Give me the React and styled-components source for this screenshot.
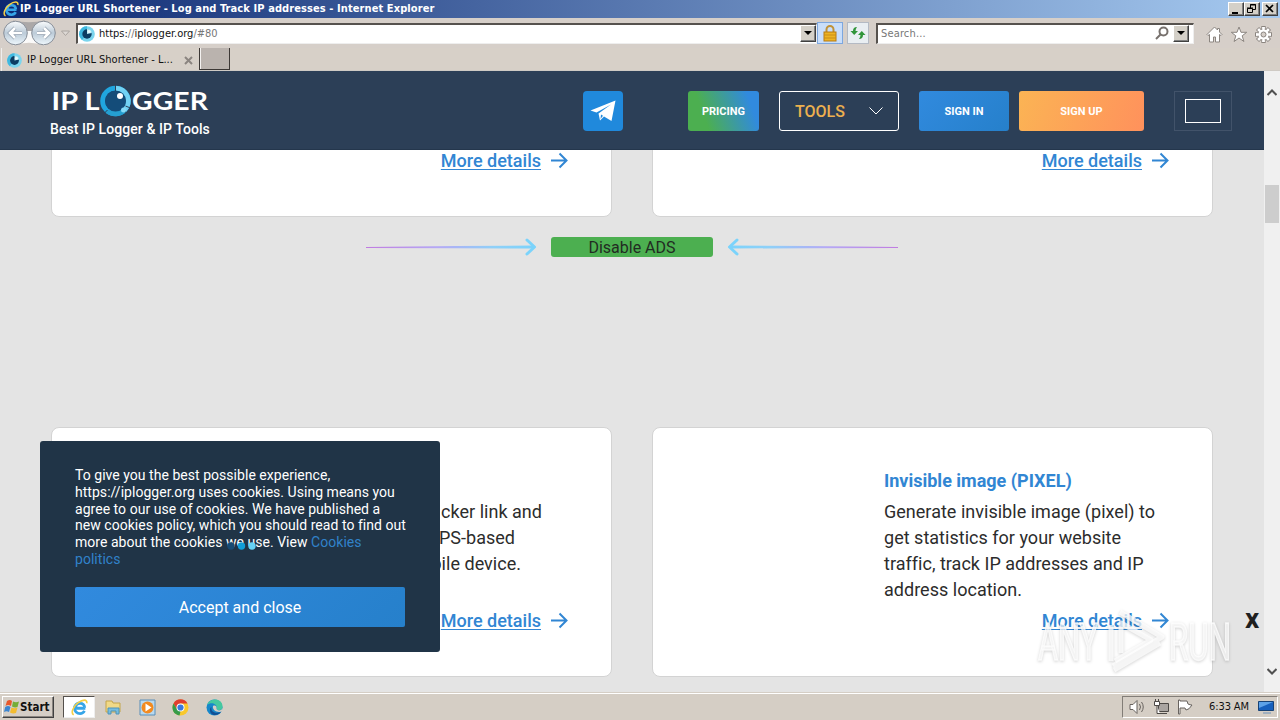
import React from 'react';
import styled, { createGlobalStyle } from 'styled-components';

const GlobalStyle = createGlobalStyle`
	* {
		box-sizing: border-box;
	}
	body {
		margin: 0;
		overflow: hidden;
		font-family: Roboto, sans-serif;
	}
`;

const Screen = styled.div`
	width: 1280px;
	height: 720px;
	display: flex;
	flex-direction: column;
	background: #d5cec6;
`;

const SystemText = styled.span`
	font-family: 'DejaVu Sans Condensed', 'DejaVu Sans', sans-serif;
	font-stretch: condensed;
	font-size: ${(p) => p.$size || 11}px;
	font-weight: ${(p) => (p.$bold ? 700 : 400)};
	letter-spacing: ${(p) => p.$spacing || 0}px;
	color: ${(p) => p.$color || '#111'};
	white-space: nowrap;
	line-height: 14px;
`;

/* window chrome */
const TitleBar = styled.div`
	height: 18px;
	flex: none;
	display: flex;
	align-items: center;
	padding: 0 2px 0 3px;
	gap: 1px;
	background: linear-gradient(90deg, #0c2871, #a6caf0);
`;

const WindowButtons = styled.div`
	display: flex;
	margin-left: auto;
`;

const WindowButton = styled.div`
	width: 16px;
	height: 14px;
	margin-left: ${(p) => p.$gap || 0}px;
	background: #d4d0c8;
	border: 1px solid;
	border-color: #fff #404040 #404040 #fff;
	box-shadow: inset -1px -1px #808080;
	svg {
		display: block;
	}
`;

const NavBar = styled.div`
	height: 30px;
	flex: none;
	display: flex;
	align-items: center;
	padding-left: 2px;
	background: #d6cfc9;
`;

const AddressField = styled.div`
	width: ${(p) => p.$width}px;
	height: 21px;
	margin-left: ${(p) => p.$left}px;
	display: flex;
	align-items: center;
	background: #fff;
	border: solid;
	border-width: 2px 1px 1px 2px;
	border-color: #56524e #eee #eee #56524e;
	padding: 0 ${(p) => p.$end || 0}px 0 ${(p) => p.$start || 1}px;
	gap: 4px;
`;

const DropButton = styled.div`
	width: 16px;
	height: 17px;
	flex: none;
	display: flex;
	align-items: center;
	justify-content: center;
	background: #d4d0c8;
	border: 1px solid;
	border-color: #fff #404040 #404040 #fff;
	box-shadow: inset -1px -1px #808080;
`;

const Spacer = styled.div`
	flex: 1;
`;

const ToolButton = styled.div`
	width: ${(p) => p.$width}px;
	height: 22px;
	margin-left: ${(p) => p.$left}px;
	display: flex;
	align-items: center;
	justify-content: center;
	border: 1px solid ${(p) => p.$border};
	background: ${(p) => p.$fill};
`;

const BrowserIcons = styled.div`
	display: flex;
	gap: 7px;
	margin: 3px 0 0 12px;
`;

const TabRow = styled.div`
	height: 23px;
	flex: none;
	display: flex;
	align-items: flex-start;
	background: #d7d0c8;
	border-bottom: 1px solid #cfcac4;
`;

const Tab = styled.div`
	width: 198px;
	height: 23px;
	margin-left: 1px;
	padding: 1px 6px 0 5px;
	display: flex;
	align-items: center;
	border-left: 1px solid #eee;
	gap: 5px;
	svg:last-child {
		margin-left: auto;
	}
`;

const NewTab = styled.div`
	width: 31px;
	height: 22px;
	background: #bab3ae;
	border: solid #3c3835;
	border-width: 0 1px 1px 1px;
	box-shadow: inset 1px 0 #f4f2f0;
`;

/* page */
const Viewport = styled.div`
	height: 621px;
	flex: none;
	display: flex;
	position: relative;
`;

const Page = styled.div`
	width: 1264px;
	height: 621px;
	display: flex;
	flex-direction: column;
	background: #e4e4e4;
	overflow: hidden;
`;

const Header = styled.header`
	height: 79px;
	flex: none;
	display: flex;
	align-items: flex-start;
	padding: 20px 32px 0 50px;
	background: #2c3f57;
	border-bottom: 1px solid #24364c;
`;

const Brand = styled.div`
	width: 180px;
	margin: -14px 353px 0 0;
	color: #fff;
	font-size: 14px;
	font-weight: 500;
	letter-spacing: 0.07px;
	line-height: 18px;
	white-space: nowrap;
	svg {
		display: block;
	}
`;

const Caption = styled.div`
	margin-top: -1px;
`;

const HeaderButton = styled.div`
	width: ${(p) => p.$width}px;
	height: 40px;
	margin-left: ${(p) => p.$left || 0}px;
	display: flex;
	align-items: center;
	justify-content: center;
	border-radius: ${(p) => p.$radius || 3}px;
	background: ${(p) => p.$fill};
	color: #fff;
	font-size: 11px;
	font-weight: 700;
`;

const ToolsMenu = styled.div`
	width: 120px;
	height: 40px;
	margin-left: 20px;
	padding: 0 15px;
	display: flex;
	align-items: center;
	justify-content: space-between;
	border: 1px solid #fff;
	border-radius: 3px;
	color: #ecb04f;
	font-size: 16px;
	font-weight: 500;
`;

const LanguageBox = styled.div`
	width: 58px;
	height: 40px;
	margin-left: 30px;
	padding: 7px 10px;
	border: 1px solid #42536a;
	div {
		width: 36px;
		height: 24px;
		border: 1px solid #fff;
	}
`;

const CardRow = styled.div`
	display: flex;
	gap: 40px;
	flex: none;
	height: ${(p) => p.$height}px;
	padding: 0 51px;
	overflow: hidden;
	align-items: flex-end;
`;

const Card = styled.article`
	width: 561px;
	height: 250px;
	flex: none;
	display: flex;
	flex-direction: column;
	padding: 40px 43px 42px 231px;
	background: #fff;
	border: 1px solid #d3d3d3;
	border-radius: 8px;
	color: #2c2c2c;
	font-size: 18px;
	line-height: 26px;
`;

const CardTitle = styled.h3`
	margin: 0 0 5px;
	height: 26px;
	font-size: 18px;
	font-weight: 700;
	color: #3186d3;
`;

const Line = styled.div`
	width: ${(p) => (p.$width ? `${p.$width}px` : 'auto')};
	display: flex;
	justify-content: ${(p) => (p.$width ? 'flex-end' : 'flex-start')};
	white-space: nowrap;
	letter-spacing: 0.02px;
`;

const MoreLink = styled.a`
	display: flex;
	align-items: center;
	gap: 10px;
	margin-top: auto;
	align-self: flex-end;
	color: #3186d3;
	font-weight: 500;
	line-height: 26px;
	span {
		text-decoration: underline;
		text-underline-offset: 2px;
		text-decoration-thickness: 1px;
	}
`;

const AdsRow = styled.div`
	height: 20px;
	margin: 20px 0 170px;
	flex: none;
	display: flex;
	justify-content: center;
	align-items: center;
	gap: 14px;
`;

const AdsButton = styled.div`
	width: 162px;
	height: 20px;
	border-radius: 3px;
	background: #4caf50;
	color: #222b22;
	font-size: 16px;
	line-height: 21px;
	text-align: center;
`;

const Scrollbar = styled.div`
	width: 16px;
	height: 621px;
	display: flex;
	flex-direction: column;
	align-items: center;
	justify-content: space-between;
	padding: 17px 0 16px;
	background: #f0f0f0;
`;

const ScrollTrack = styled.div`
	flex: 1;
	align-self: stretch;
	padding: 87px 0 0 1px;
	div {
		width: 14px;
		height: 38px;
		background: #cdcdcd;
	}
`;

const CookieBox = styled.div`
	position: absolute;
	left: 40px;
	top: 370px;
	width: 400px;
	height: 211px;
	padding: 26px 35px 25px;
	border-radius: 3px;
	background: #203447;
	color: #fff;
	font-size: 14px;
	line-height: 16.8px;
	p {
		margin: 0 -5px 19px 0;
		letter-spacing: 0.035px;
	}
	a {
		color: #3182ca;
	}
`;

const AcceptButton = styled.div`
	height: 40px;
	border-radius: 2px;
	background: linear-gradient(135deg, #318ade, #2680cb);
	font-size: 16px;
	line-height: 41px;
	text-align: center;
`;

const Dots = styled.svg`
	position: absolute;
	left: 226px;
	top: 470px;
`;

const CloseAd = styled.div`
	position: absolute;
	left: 1245px;
	top: 535px;
	color: #1f1f1f;
	font-size: 28px;
	line-height: 26px;
	font-weight: 700;
`;

const Watermark = styled.svg`
	position: absolute;
	left: 1030px;
	top: 532px;
	filter: drop-shadow(0 1px 1.5px rgba(0, 0, 0, 0.22));
`;

/* taskbar */
const Taskbar = styled.div`
	height: 28px;
	flex: none;
	display: flex;
	align-items: center;
	padding: 1px 2px 0;
	background: #d5cec5;
	border-top: 1px solid #d5cec5;
	box-shadow: inset 0 1px #fff;
`;

const StartButton = styled.div`
	width: 52px;
	height: 22px;
	display: flex;
	align-items: center;
	gap: 0;
	padding-left: 1px;
	background: #d5cec6;
	border: 1px solid;
	border-color: #fff #404040 #404040 #fff;
	box-shadow: inset -1px -1px #8a8580;
`;

const TaskButton = styled.div`
	width: ${(p) => (p.$active ? 32 : 22)}px;
	height: 22px;
	margin-left: ${(p) => p.$left}px;
	display: flex;
	align-items: center;
	justify-content: center;
	background: ${(p) => (p.$active ? '#fff' : 'transparent')};
	border: ${(p) => (p.$active ? '1px solid #55514d' : '1px solid transparent')};
	border-right-color: ${(p) => (p.$active ? '#eee' : 'transparent')};
	border-bottom-color: ${(p) => (p.$active ? '#eee' : 'transparent')};
`;

const Tray = styled.div`
	width: 156px;
	height: 22px;
	margin-left: auto;
	padding-left: 6px;
	display: flex;
	align-items: center;
	border: 1px solid;
	border-color: #827d77 #fff #fff #827d77;
	svg {
		flex: none;
		margin-right: 7px;
	}
`;

const ClockText = styled.div`
	width: 42px;
	margin: 0 9px 0 8px;
	display: flex;
`;

function IeIcon({ size = 16 }) {
	return (
		<svg width={size} height={size} viewBox='0 0 16 16' fill='none'>
			<path d='M13.500 8.700H4.300C4.300 5.800 6 4.200 8.500 4.200s4.200 1.600 4.400 4.100M12.700 11.200c-1 1.800-2.300 2.500-4.200 2.500C5.500 13.700 3.300 11.400 3.300 8.700S5.500 3.700 8.300 3.700' stroke='#36a5e8' strokeWidth='2.600' />
			<path d='M2.500 15C-.500 13 2 7 6.500 3.700 11 .300 15.600 0 14.800 4' stroke='#f5cf45' strokeWidth='1.500' />
		</svg>
	);
}

function EyeIcon({ size = 16 }) {
	return (
		<svg width={size} height={size} viewBox='0 0 16 16'>
			<circle cx='8' cy='8' r='7.800' fill='#7bd5ee' />
			<path d='M8 .200A7.800 7.800 0 0 0 3 14L8 8z' fill='#3fb8df' />
			<circle cx='8' cy='8' r='4.700' fill='#0c3d63' />
			<path d='M8 8V3q4.500 0 4.800 4z' fill='#b5eaf6' />
			<circle cx='10' cy='5.500' r='1.600' fill='#e8fafd' />
		</svg>
	);
}

function NavArrows() {
	return (
		<svg width='70' height='28' viewBox='0 0 70 28'>
			<defs>
				<linearGradient id='glass' x2='0' y2='1'>
					<stop stopColor='#fafcfd' />
					<stop offset='.5' stopColor='#bccbd8' />
					<stop offset='1' stopColor='#eef7fc' />
				</linearGradient>
			</defs>
			<path d='M11 1.500Q27 5 43 1.500V14H11z' fill='#aba8a8' />
			<path d='M11 26.500Q27 21 43 26.500V12H11z' fill='#fbfaf9' />
			<circle cx='13.500' cy='14' r='11.800' fill='url(#glass)' stroke='#878e98' />
			<circle cx='41.500' cy='14' r='11.800' fill='url(#glass)' stroke='#878e98' />
			<path d='M20 14H8m5-5-5 5 5 5M35 14h12m-5-5 5 5-5 5' fill='none' stroke='#8f9dac' strokeWidth='4' />
			<path d='M20 14H8m5-5-5 5 5 5M35 14h12m-5-5 5 5-5 5' fill='none' stroke='#fff' strokeWidth='2.600' />
			<path d='M59.500 12h8l-4 4.500z' fill='#ddd9d5' stroke='#aaa49f' />
		</svg>
	);
}

function Triangle() {
	return (
		<svg width='8' height='5' viewBox='0 0 8 5'>
			<path d='M0 0h8L4 4z' fill='#000' />
		</svg>
	);
}

function Logo() {
	return (
		<svg width='160' height='44' viewBox='0 0 160 44'>
			<g fill='#fff' fontFamily='Lato, sans-serif' fontWeight='700' fontSize='25.500'>
				<text x='1.500' y='33' textLength='48' lengthAdjust='spacingAndGlyphs'>IP L</text>
				<text x='82' y='33' textLength='76' lengthAdjust='spacingAndGlyphs'>GGER</text>
			</g>
			<g transform='translate(65.500 24)'>
				<circle r='12.800' fill='none' stroke='#20a6df' strokeWidth='5' />
				<path d='M0-12.800A12.800 12.800 0 0 1 9 9' fill='none' stroke='#72d2f4' strokeWidth='5' />
				<path d='M9 9A12.800 12.800 0 0 1-8 10' fill='none' stroke='#259fd1' strokeWidth='5' />
				<path d='M0-16v6M-8 9l-4 4M7 8l5 5M10 5l5 2' stroke='#2c3f57' />
				<circle r='10.500' fill='#144c79' />
				<circle cx='4.500' cy='-5' r='3' fill='#fff' />
				<circle cx='8' cy='9' r='2.500' fill='#86daf8' />
			</g>
		</svg>
	);
}

function AdsArrow({ flip }) {
	const id = flip ? 'adsLeft' : 'adsRight';
	return (
		<svg width='171' height='20' viewBox='0 0 171 20' transform={flip ? 'scale(-1 1)' : undefined}>
			<defs>
				<linearGradient id={id} gradientUnits='userSpaceOnUse' x1='0' x2='170' y1='0' y2='0'>
					<stop stopColor='#c07be0' />
					<stop offset='.42' stopColor='#b5a9f5' />
					<stop offset='.75' stopColor='#8fd0f8' />
					<stop offset='1' stopColor='#7bd3fb' />
				</linearGradient>
			</defs>
			<path d='M0 9.900 90 9 168 8.500v3L90 11.200 0 11.100z' fill={`url(#${id})`} />
			<path d='m161 3 7.500 7-7.500 7' fill='none' stroke='#7bd3fb' strokeWidth='3' strokeLinecap='round' strokeLinejoin='round' />
		</svg>
	);
}

function MoreDetails() {
	return (
		<MoreLink>
			<span>More details</span>
			<svg width='17' height='18' viewBox='0 0 17 18' fill='none' stroke='#3186d3' strokeWidth='2'>
				<path d='M0 8.500h15M8.500 1.500l7 7-7 7' />
			</svg>
		</MoreLink>
	);
}

function Chrome() {
	return (
		<>
			<TitleBar>
				<IeIcon size={16} />
				<SystemText $bold $color='#fff' $spacing={0.09}>
					IP Logger URL Shortener - Log and Track IP addresses - Internet Explorer
				</SystemText>
				<WindowButtons>
					<WindowButton>
						<svg width='14' height='12'><path d='M3 9h6v2H3z' /></svg>
					</WindowButton>
					<WindowButton>
						<svg width='14' height='12' fill='none' stroke='#000'>
							<path d='M5.500 5V1.500h5v5H8M5 2h6M2.500 5.500h5v4h-5zM2 5h6' />
						</svg>
					</WindowButton>
					<WindowButton $gap={2}>
						<svg width='14' height='12' stroke='#000' strokeWidth='1.700'><path d='m3 2 7 7m0-7-7 7' /></svg>
					</WindowButton>
				</WindowButtons>
			</TitleBar>
			<NavBar>
				<NavArrows />
				<AddressField $width={741} $left={4}>
					<EyeIcon size={16} />
					<SystemText>
						https:<SystemText $color='#777'>//</SystemText>iplogger.org<SystemText $color='#777'>/#80</SystemText>
					</SystemText>
					<Spacer />
					<DropButton><Triangle /></DropButton>
				</AddressField>
				<ToolButton $width={26} $left={0} $border='#7da7df' $fill='#c9defa'>
					<svg width='14' height='17' viewBox='0 0 14 17'>
						<path d='M3.500 8V4.500a3.500 3.500 0 0 1 7 0V8' fill='none' stroke='#c09238' strokeWidth='2' />
						<rect x='1' y='7' width='12' height='9' fill='#edb322' stroke='#b77b13' />
						<path d='M1 10h12M1 13h12' stroke='#c98d17' />
					</svg>
				</ToolButton>
				<ToolButton $width={22} $left={4} $border='#b4bac4' $fill='#e9eef2'>
					<svg width='16' height='14' viewBox='0 0 16 14' fill='#31953a'>
						<path d='M7 1Q3 1 3 5H.500L4.200 9 8 5H5.500Q5.500 3 7 1z' />
						<path d='M9 13q4 0 4-4h2.500l-3.700-4L8 9h2.500q0 2-1.500 4z' />
					</svg>
				</ToolButton>
				<AddressField $width={318} $left={7} $start={3} $end={4}>
					<SystemText $color='#777' $spacing={0.15}>Search...</SystemText>
					<Spacer />
					<Magnifier />
					<DropButton><Triangle /></DropButton>
				</AddressField>
				<BrowserIcons>
					<svg width='17' height='17' viewBox='0 0 17 17' fill='#fff' stroke='#8b8580'>
						<path d='M8.500 1 1 8.500l1 1 1.500-1V16h4v-5h2v5h4V8.500l1.500 1 1-1L13.500 6V2.500h-2V4z' />
					</svg>
					<svg width='18' height='17' viewBox='0 0 18 17' fill='#fff' stroke='#8b8580'>
						<path d='m9 1 2 5.300h5.700l-4.500 3.500 1.700 5.700L9 12l-4.900 3.500 1.700-5.700L1.300 6.300H7z' />
					</svg>
					<Gear />
				</BrowserIcons>
			</NavBar>
			<TabRow>
				<Tab>
					<EyeIcon size={15} />
					<SystemText>IP Logger URL Shortener - L...</SystemText>
					<svg width='9' height='9' stroke='#8b8580' strokeWidth='2'><path d='m1 1 7 7m0-7-7 7' /></svg>
				</Tab>
				<NewTab />
			</TabRow>
		</>
	);
}

function Magnifier() {
	return (
		<svg width='14' height='15' viewBox='0 0 14 15' fill='none' stroke='#77716d' strokeWidth='2'>
			<circle cx='8.500' cy='5.500' r='4' />
			<path d='M5.500 8.500 1 13' />
		</svg>
	);
}

function Gear() {
	const angles = [0, 45, 90, 135, 180, 225, 270, 315];
	return (
		<svg width='17' height='17' viewBox='0 0 17 17' fill='#fff' stroke='#8b8580'>
			{angles.map((a) => (
				<rect key={a} x='6.800' y='.500' width='3.400' height='4' transform={`rotate(${a} 8.500 8.500)`} />
			))}
			<circle cx='8.500' cy='8.500' r='5.500' />
			{angles.map((a) => (
				<rect key={a} x='7.300' y='1' width='2.400' height='4' stroke='none' transform={`rotate(${a} 8.500 8.500)`} />
			))}
			<circle cx='8.500' cy='8.500' r='2.500' fill='#d6cfc9' />
		</svg>
	);
}

function SiteHeader() {
	return (
		<Header>
			<Brand>
				<Logo />
				<Caption>Best IP Logger &amp; IP Tools</Caption>
			</Brand>
			<HeaderButton $width={40} $radius={4} $fill='#2089dc'>
				<svg width='26' height='22' viewBox='0 0 26 22' fill='#fff'>
					<path d='M.500 10.500 25.500.500 21.500 21l-7.500-4.500-4 4-1.500-7L21 4.500 6.500 12.500z' />
					<path d='m10.500 19 .5-4.500 2 1.300z' fill='#2089dc' />
				</svg>
			</HeaderButton>
			<HeaderButton $width={71} $left={65} $fill='linear-gradient(70deg, #4caf50 25%, #318ade 85%)'>PRICING</HeaderButton>
			<ToolsMenu>
				TOOLS
				<svg width='14' height='8' viewBox='0 0 14 8' fill='none' stroke='#fff'><path d='m.500.500 6.500 6.500 6.500-6.500' /></svg>
			</ToolsMenu>
			<HeaderButton $width={90} $left={20} $fill='linear-gradient(135deg, #318ade, #2680cb)'>SIGN IN</HeaderButton>
			<HeaderButton $width={125} $left={10} $fill='linear-gradient(110deg, #fbb454, #ff915c)'>SIGN UP</HeaderButton>
			<LanguageBox><div /></LanguageBox>
		</Header>
	);
}

function AnyRun() {
	return (
		<Watermark width='210' height='76' viewBox='0 0 210 76'>
			<g fill='#fff' fillOpacity='.7' stroke='#fff' strokeOpacity='.7' fontFamily='Roboto, sans-serif' fontSize='52'>
				<text x='8' y='57' textLength='60' lengthAdjust='spacingAndGlyphs' strokeWidth='1.500'>ANY</text>
				<text x='139' y='57' textLength='62' lengthAdjust='spacingAndGlyphs' strokeWidth='1.500'>RUN</text>
			</g>
			<g fill='none' stroke='#fff' strokeOpacity='.75' strokeWidth='5' strokeLinejoin='round'>
				<path d='M81 22v36M91 50V20l30 17-36 21' />
				<path d='M90 9l42 25-49 29M84 67l46-27' />
			</g>
		</Watermark>
	);
}

function Tasks() {
	return (
		<Taskbar>
			<StartButton>
				<svg width='16' height='16' viewBox='0 0 16 16'>
					<path d='M3 2q3-2 5 0L7 7Q4 5 1.500 7z' fill='#e8582b' />
					<path d='M9 2.500q3 1.500 6 0L13.500 8Q11 9 8 7.500z' fill='#75ad36' />
					<path d='M1.200 8q3-2 5.300 0L5 13Q2.500 11.500 0 13z' fill='#3c85d0' />
					<path d='M7.500 8.500q3 1.500 6 0L12 14q-3 1-6-.500z' fill='#f3bc30' />
				</svg>
				<SystemText $bold $size={11.5}>Start</SystemText>
			</StartButton>
			<TaskButton $active $left={9}><IeIcon size={17} /></TaskButton>
			<TaskButton $left={7}>
				<svg width='17' height='16' viewBox='0 0 17 16'>
					<path d='M1 2h6l1 2h7v9H1z' fill='#f1d987' stroke='#c4a54b' />
					<path d='M3 15V9h11v6h-3v-3H6v3z' fill='#76bde0' stroke='#4f93b7' />
				</svg>
			</TaskButton>
			<TaskButton $left={12}>
				<svg width='17' height='17' viewBox='0 0 17 17'>
					<path d='M1 1h15v15H1z' fill='#b9d9ef' stroke='#588eb9' />
					<circle cx='8.500' cy='8.500' r='6' fill='#f28a20' />
					<path d='m6.500 4.500 6 4-6 4z' fill='#fff' />
				</svg>
			</TaskButton>
			<TaskButton $left={11}>
				<svg width='17' height='17' viewBox='0 0 17 17'>
					<circle cx='8.500' cy='8.500' r='8' fill='#f9c82c' />
					<path d='M1.500 4.500a8 8 0 0 1 14 0h-7L5 10.500z' fill='#df3e30' />
					<path d='M1.500 4.500 5.200 10.500 8.500 12.500l-1 4A8 8 0 0 1 1.500 4.500' fill='#369b4b' />
					<circle cx='8.500' cy='8.500' r='4' fill='#fff' />
					<circle cx='8.500' cy='8.500' r='3.100' fill='#3979df' />
				</svg>
			</TaskButton>
			<TaskButton $left={12}>
				<svg width='17' height='17' viewBox='0 0 17 17'>
					<circle cx='8.500' cy='8.500' r='8' fill='#1687ca' />
					<path d='M1 6C4-2 17-1 16.500 8c0 4-6 4-6 1.500C12 5 5 2 1 6' fill='#45c8a0' />
					<path d='M5.500 8c-1 5 4 7 9.500 5-3 4-11 4.500-11-2 0-2 1-3 1.500-3' fill='#124f94' />
					<path d='M7 7c2-1 4 0 3.500 2.500 0 2 4 3 6 0l-.500 3C11 14 6 11 7 7' fill='#d5cec5' />
				</svg>
			</TaskButton>
			<Tray>
				<svg width='17' height='16' viewBox='0 0 17 16' fill='#fff' stroke='#68635f'>
					<path d='M1 5.500h3l4-4v13l-4-4H1z' />
					<path d='M10.500 5q2 3 0 6M12.500 3q3.500 5 0 10' fill='none' />
				</svg>
				<svg width='17' height='16' viewBox='0 0 17 16' fill='#fff' stroke='#4d4946'>
					<path d='M5.500 4.500h10v8h-10z' fill='#aaa5a1' />
					<path d='M7 14.500h7M1.500 2.500h5v4h-5zM2.500 0v2M5.500 0v2M4 6.500v8h3' />
				</svg>
				<svg width='17' height='16' viewBox='0 0 17 16' fill='#fff' stroke='#68635f'>
					<path d='M1.500 1v14h1.500V9h5l1 2q3 0 6-5-2 0-4-1L10 2H3V1z' />
				</svg>
				<ClockText><SystemText $spacing={-0.1}>6:33 AM</SystemText></ClockText>
				<svg width='16' height='14' viewBox='0 0 16 14'>
					<path d='M.500 1.500h15v9H.500z' fill='#1760bd' stroke='#174276' />
					<path d='M1 2h14L1 8z' fill='#5da2e8' />
					<path d='M5 13h8' stroke='#6d91b8' />
				</svg>
			</Tray>
		</Taskbar>
	);
}

function App() {
	return (
		<Screen>
			<GlobalStyle />
			<Chrome />
			<Viewport>
				<Page>
					<SiteHeader />
					<CardRow $height={67}>
						<Card><MoreDetails /></Card>
						<Card><MoreDetails /></Card>
					</CardRow>
					<AdsRow>
						<AdsArrow />
						<AdsButton>Disable ADS</AdsButton>
						<AdsArrow flip />
					</AdsRow>
					<CardRow $height={250}>
						<Card>
							<CardTitle />
							<Line $width={259}>cker link and</Line>
							<Line $width={232}>GPS-based</Line>
							<Line $width={238}>mobile device.</Line>
							<MoreDetails />
						</Card>
						<Card>
							<CardTitle>Invisible image (PIXEL)</CardTitle>
							<Line>Generate invisible image (pixel) to</Line>
							<Line>get statistics for your website</Line>
							<Line>traffic, track IP addresses and IP</Line>
							<Line>address location.</Line>
							<MoreDetails />
						</Card>
					</CardRow>
				</Page>
				<Scrollbar>
					<svg width='10' height='10' fill='none' stroke='#505050' strokeWidth='2'><path d='m.500 7 4.500-4.500L9.500 7' /></svg>
					<ScrollTrack><div /></ScrollTrack>
					<svg width='10' height='10' fill='none' stroke='#505050' strokeWidth='2'><path d='m.500 3 4.500 4.500L9.500 3' /></svg>
				</Scrollbar>
				<CookieBox>
					<p>
						To give you the best possible experience,<br />
						https://iplogger.org uses cookies. Using means you<br />
						agree to our use of cookies. We have published a<br />
						new cookies policy, which you should read to find out<br />
						more about the cookies we use. View <a>Cookies<br />politics</a>
					</p>
					<AcceptButton>Accept and close</AcceptButton>
				</CookieBox>
				<Dots width='34' height='10'>
					<circle cx='5' cy='5' r='3.700' fill='#174a73' />
					<circle cx='15.500' cy='5' r='3.700' fill='#119dd8' />
					<circle cx='26' cy='5' r='3.700' fill='#66d2f5' />
				</Dots>
				<CloseAd>x</CloseAd>
				<AnyRun />
			</Viewport>
			<Tasks />
		</Screen>
	);
}

export default App;
